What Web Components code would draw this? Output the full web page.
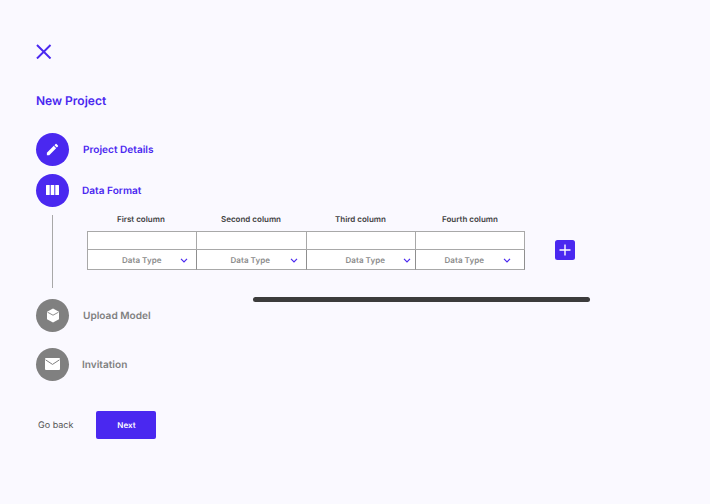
<!DOCTYPE html>
<html><head><meta charset="utf-8"><style>
html,body{margin:0;background:#faf9ff;}
body{font-family:Inter,"Liberation Sans",sans-serif;width:710px;height:504px;overflow:hidden;text-rendering:geometricPrecision}
</style></head><body>
<template id="step-t"><style>
:host{display:flex;align-items:center;height:33px;color:var(--c);font:600 10.1px Inter,sans-serif}
.c{width:33px;height:33px;border-radius:50%;background:var(--c);display:flex;align-items:center;justify-content:center;flex:none}
.l{margin-left:var(--gap,14px);padding-top:2px}
</style><div class="c"><slot name="icon"></slot></div><div class="l"><slot></slot></div></template>

<template id="field-t"><style>
:host{display:grid;grid-template-columns:109px 109.5px 109.5px 109px;width:438px;box-sizing:border-box;border:1px solid #a8a8a8;border-right:0;border-bottom:0;background:#fff}
</style><slot></slot></template>

<template id="cell-t"><style>
:host{display:block;position:relative;box-sizing:border-box;height:18px;border-right:1px solid #a8a8a8;border-bottom:1px solid #a8a8a8}
:host([type]){height:20px;padding-top:1px;border-right-color:#8f8f8f;display:flex;align-items:center;font:600 8px Inter,sans-serif;color:#8b8b8b;letter-spacing:.05px}
:host(:not([type])) svg{display:none}
span{margin-left:var(--t)}
svg{position:absolute;left:var(--a);width:8px;height:5px;margin-top:1px}
</style><span><slot></slot></span><svg viewBox="0 0 8 5" fill="none" stroke="#4a28f0" stroke-width="1.2"><path d="M1 .8l3 3 3-3"/></svg></template>

<template id="app-t"><style>
:host{display:block;padding:43.5px 0 0 36px;position:relative;height:460.5px}
.close{display:block;width:15.5px;height:15.5px}
h1{margin:33.500px 0 0;font:600 12px/16px Inter,sans-serif;color:#4a28f0;height:16px}
.steps{margin-top:24px;--c:#4a28f0}
.two{margin-top:8px}
.body{display:flex;height:92px}
.rail{width:1px;background:#a8a8a8;margin:8px 0 11px 16px;height:73px;flex:none}
.data{margin-left:34px;width:520px;position:relative}
.heads{display:grid;grid-template-columns:109px 109.5px 109.5px 109.5px;height:24px;padding-top:6px;box-sizing:border-box;font:600 8px/12px Inter,sans-serif;color:#3f3f3f;white-space:nowrap}
.heads span{padding-left:var(--p)}
.row{display:flex;align-items:flex-start}
.add{margin:9px 0 0 30px;width:20px;height:20px;border-radius:2.5px;background:#4a28f0;display:flex;align-items:center;justify-content:center;flex:none}
.scroll{position:absolute;left:166px;top:90px;width:337px;height:5px;border-radius:3px;background:#3c3c3c}
.gray{--c:#808080}
.inv{margin-top:16px}
.foot{display:flex;align-items:center;margin:30px 0 0 2px;height:28px;font:400 9px Inter,sans-serif;color:#555}
.foot span{padding-top:1px}
.next{margin-left:23px;width:60px;height:28px;border-radius:2px;background:#4a28f0;color:#fff;font:600 8px Inter,sans-serif;display:flex;align-items:center;justify-content:center}
svg[slot]{display:block}
</style>
<svg class="close" viewBox="0 0 16 16" fill="none" stroke="#4a28f0" stroke-width="2"><path d="M1 1l14 14M15 1L1 15"/></svg>
<h1>New Project</h1>
<div class="steps">
<wc-step style="--gap:14px">
<svg slot="icon" width="15" height="15" viewBox="0 0 24 24" fill="#fff"><path d="M3 17.25V21h3.750L17.810 9.940l-3.750-3.750L3 17.250zM20.710 7.040a1 1 0 0 0 0-1.410l-2.340-2.340a1 1 0 0 0-1.410 0l-1.830 1.830 3.750 3.750 1.830-1.830z"/></svg>
Project Details</wc-step>
<wc-step class="two" style="--gap:13px">
<svg slot="icon" width="13" height="10" viewBox="0 0 13 10" fill="#fff"><path d="M0 .5A.5.5 0 0 1 .5 0H3.700v10H.5a.5.5 0 0 1-.5-.5zM4.700 0h3.600v10H4.700zM9.300 0h3.200a.5.5 0 0 1 .5.5v9a.5.5 0 0 1-.5.5H9.300z"/></svg>
Data Format</wc-step>
<div class="body"><div class="rail"></div>
<div class="data">
<div class="heads"><span style="--p:30px">First column</span><span style="--p:25px">Second column</span><span style="--p:29.500px">Third column</span><span style="--p:27px">Fourth column</span></div>
<div class="row">
<wc-fields>
<wc-cell></wc-cell><wc-cell></wc-cell><wc-cell></wc-cell><wc-cell></wc-cell>
<wc-cell type style="--t:34px;--a:92px">Data Type</wc-cell>
<wc-cell type style="--t:33.500px;--a:93px">Data Type</wc-cell>
<wc-cell type style="--t:39px;--a:96.500px">Data Type</wc-cell>
<wc-cell type style="--t:28.500px;--a:86.500px">Data Type</wc-cell>
</wc-fields>
<div class="add"><svg width="12" height="12" viewBox="0 0 12 12" stroke="#fff" stroke-width="1.4"><path d="M6 .5v11M.5 6h11"/></svg></div>
</div>
<div class="scroll"></div>
</div></div>
<div class="gray">
<wc-step style="--gap:14px">
<svg slot="icon" width="14" height="15" viewBox="0 0 14 15"><path fill="#fff" d="M7 .5l6 3.300v7.400l-6 3.300-6-3.300V3.800z"/><path fill="none" stroke="#808080" stroke-width=".9" d="M1.500 4.200L7 7.200l5.500-3"/></svg>
Upload Model</wc-step>
<wc-step class="inv" style="--gap:13px">
<svg slot="icon" width="15" height="12" viewBox="0 0 15 12"><rect width="15" height="12" rx="1" fill="#fff"/><path fill="none" stroke="#808080" stroke-width="1" d="M.5 1.800l7 4.600 7-4.600"/></svg>
Invitation</wc-step>
</div>
</div>
<div class="foot"><span>Go back</span><div class="next">Next</div></div>
</template>

<wc-app></wc-app>
<script>
function def(n,t){customElements.define(n,class extends HTMLElement{constructor(){super();this.attachShadow({mode:'open'}).appendChild(document.getElementById(t).content.cloneNode(true))}})}
def('wc-step','step-t');def('wc-fields','field-t');def('wc-cell','cell-t');def('wc-app','app-t');
</script>
</body></html>
